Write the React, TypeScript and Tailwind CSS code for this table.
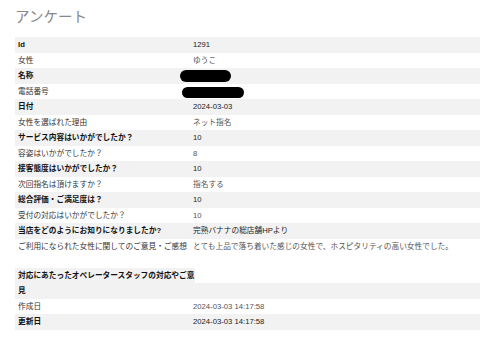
import React from "react";

type Row = { label: string; value: React.ReactNode };

const rows: Row[] = [
  { label: "Id", value: "1291" },
  { label: "女性", value: "ゆうこ" },
  {
    label: "名称",
    value: <span className="inline-block ml-[-13px] mt-[2px] w-[51px] h-[12px] rounded-full bg-black align-top" />,
  },
  {
    label: "電話番号",
    value: <span className="inline-block ml-[-11px] mt-[3px] w-[62px] h-[11px] rounded-full bg-black align-top" />,
  },
  { label: "日付", value: "2024-03-03" },
  { label: "女性を選ばれた理由", value: "ネット指名" },
  { label: "サービス内容はいかがでしたか？", value: "10" },
  { label: "容姿はいかがでしたか？", value: "8" },
  { label: "接客態度はいかがでしたか？", value: "10" },
  { label: "次回指名は頂けますか？", value: "指名する" },
  { label: "総合評価・ご満足度は？", value: "10" },
  { label: "受付の対応はいかがでしたか？", value: "10" },
  { label: "当店をどのようにお知りになりましたか?", value: "完熟バナナの総店舗HPより" },
  {
    label: "ご利用になられた女性に関してのご意見・ご感想",
    value: "とても上品で落ち着いた感じの女性で、ホスピタリティの高い女性でした。",
  },
];

function TableRow({ row, i }: { row: Row; i: number }) {
  const odd = i % 2 === 0;
  return (
    <div className={`flex h-[15.5px] leading-[15.5px] ${odd ? "bg-[#f2f2f2]" : "bg-white"}`}>
      <div className={`w-[178px] shrink-0 pl-[3px] whitespace-nowrap ${odd ? "font-bold text-[#111]" : "text-[#333]"}`}>
        {row.label}
      </div>
      <div className={`whitespace-nowrap ${odd ? "text-[#222]" : "text-[#555]"}`}>{row.value}</div>
    </div>
  );
}

export default function App() {
  return (
    <div
      className="w-[480px] h-[352px] bg-white overflow-hidden text-[7.7px]"
      style={{ fontFamily: '"Liberation Sans", "Noto Sans CJK JP", sans-serif' }}
    >
      <div className="h-[37px] pt-[7px] pl-[15px] text-[14.5px] leading-[20px] text-[#888]">アンケート</div>
      <div className="pl-[15px]">
        {rows.map((r, i) => (
          <TableRow key={i} row={r} i={i} />
        ))}
      </div>
      <div className="pl-[15px] mt-[14px]">
        <div className="flex">
          <div className="w-[180px] shrink-0 pl-[3px] bg-[#f2f2f2] font-bold text-[#111] leading-[15.5px]">
            <div className="h-[15px] whitespace-nowrap">対応にあたったオペレータースタッフの対応やご意</div>
            <div className="h-[15.5px]">見</div>
          </div>
          <div className="flex-1 flex flex-col">
            <div className="h-[15px] bg-white" />
            <div className="h-[15.5px] bg-[#f2f2f2]" />
          </div>
        </div>
        <TableRow row={{ label: "作成日", value: "2024-03-03 14:17:58" }} i={1} />
        <TableRow row={{ label: "更新日", value: "2024-03-03 14:17:58" }} i={0} />
      </div>
    </div>
  );
}
